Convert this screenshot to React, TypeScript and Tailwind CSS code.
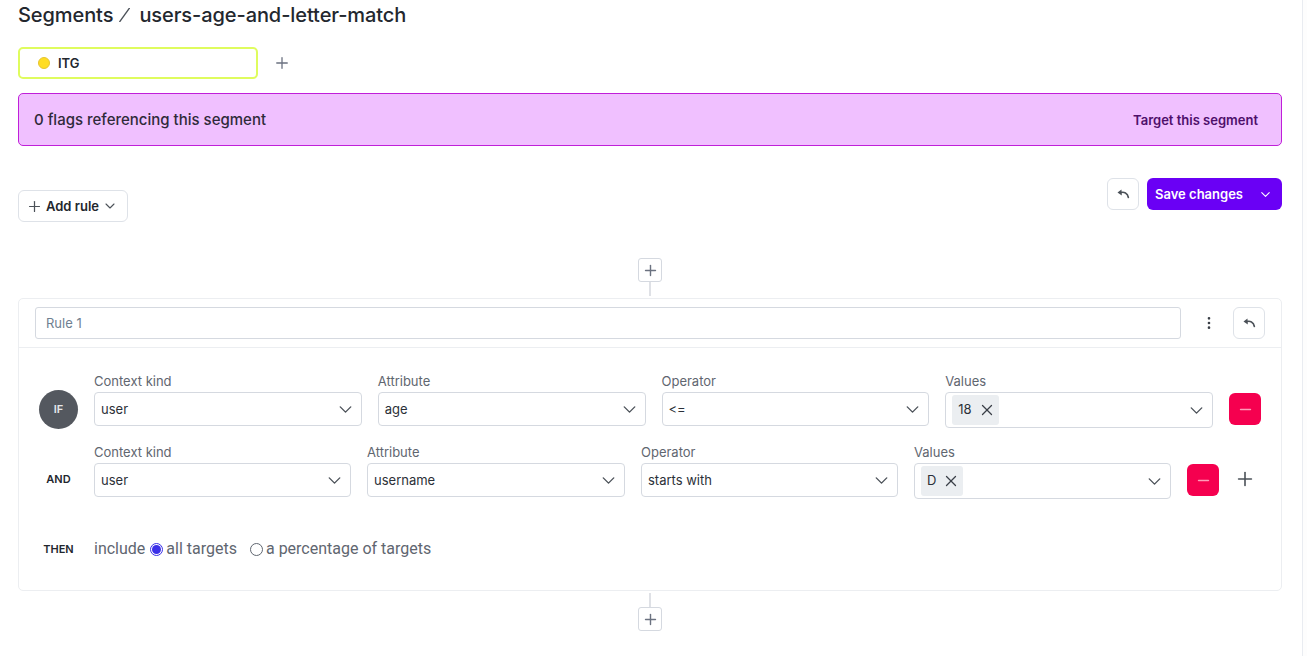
import { ChevronDown, EllipsisVertical, Minus, Plus, X } from 'lucide-react'

function UndoIcon() {
  return (
    <svg width="14" height="14" viewBox="0 0 14 14" fill="none">
      <path d="M1.5 5.5 L5.5 2.5 L5.8 8.5 Z" fill="#4b5158" />
      <path d="M4.5 5.6 C8 4.8 11.6 5.6 12.4 10.5" stroke="#4b5158" strokeWidth="1.6" strokeLinecap="round" />
    </svg>
  )
}

function UndoButton() {
  return (
    <button className="flex h-8 w-8 items-center justify-center rounded-md border border-[#dee2e8] bg-white">
      <UndoIcon />
    </button>
  )
}

function ConnectorPlus() {
  return (
    <button className="flex h-6 w-6 items-center justify-center rounded-[3px] border border-[#d5d9e0] bg-white text-[#6b7280]">
      <Plus className="h-[17px] w-[17px]" strokeWidth={2} />
    </button>
  )
}

function Field({ label, value, width }: { label: string; value: string; width: string }) {
  return (
    <div className={`flex flex-col ${width}`}>
      <span className="mb-[2px] h-[18px] text-[13px] leading-[18px] text-[#5f6670]">{label}</span>
      <div className="flex h-[34px] items-center justify-between rounded-[4px] border border-[#d5d9e0] bg-white pl-[6px] pr-[5px]">
        <span className="pt-[2px] text-[13px] text-[#2b3038]">{value}</span>
        <ChevronDown className="h-[21px] w-[21px] text-[#4b5158]" strokeWidth={1.6} />
      </div>
    </div>
  )
}

function ValuesField({ tag, width }: { tag: string; width: string }) {
  return (
    <div className={`flex flex-col ${width}`}>
      <span className="mb-[2px] h-[18px] text-[13px] leading-[18px] text-[#5f6670]">Values</span>
      <div className="flex h-[36px] items-center justify-between rounded-[4px] border border-[#d5d9e0] bg-white pl-[6px] pr-[5px]">
        <span className="flex h-[30px] items-center gap-[6px] rounded-[3px] bg-[#ebeef1] pl-[6px] pr-[3px] text-[13px] text-[#2b3038]">
          {tag}
          <X className="h-[18px] w-[18px] text-[#3a3f47]" strokeWidth={1.75} />
        </span>
        <ChevronDown className="h-[21px] w-[21px] text-[#4b5158]" strokeWidth={1.6} />
      </div>
    </div>
  )
}

function RemoveButton() {
  return (
    <button className="flex h-8 w-8 items-center justify-center rounded-md bg-[#f5004f] text-[#ff9cb8]">
      <Minus className="h-[17px] w-[17px]" strokeWidth={2} />
    </button>
  )
}

export default function App() {
  return (
    <div className="flex h-[656px] w-full overflow-hidden bg-white font-['Inter',sans-serif]">
      <div className="w-[1303px] shrink-0 border-r border-[#e9ecf1] pl-[18px] pr-[20px]">
        {/* Title */}
        <div className="flex h-[30px] items-center text-[20px] font-medium tracking-[-0.08px] text-[#23272e]">
          <span>Segments</span>
          <svg className="ml-[6px] mr-[9px]" width="11" height="14" viewBox="0 0 11 14" fill="none">
            <path d="M0.5 14 L10.5 0" stroke="#4b5158" strokeWidth="1.3" />
          </svg>
          <span>users-age-and-letter-match</span>
        </div>

        {/* Environment tab */}
        <div className="mt-[17px] flex items-center">
          <div className="flex h-8 w-[240px] items-center gap-[8px] rounded-[5px] border-2 border-[#dffc5e] pl-[18px]">
            <span className="h-3 w-3 rounded-full border border-[#e6c530] bg-[#ffdd22]" />
            <span className="pt-[2px] text-[13px] font-semibold text-[#23272e]">ITG</span>
          </div>
          <Plus className="ml-[15px] h-[18px] w-[18px] text-[#6b7280]" strokeWidth={1.75} />
        </div>

        {/* Reference banner */}
        <div className="mt-[14px] flex h-[53px] items-center justify-between rounded-[5px] border border-[#c01fd9] bg-[#f0c0ff] pl-[15px] pr-[23px]">
          <span className="pt-[2px] text-[15px] font-medium text-[#2f2a3a]">0 flags referencing this segment</span>
          <span className="pt-[2px] text-[13px] font-semibold text-[#4e0f6b]">Target this segment</span>
        </div>

        {/* Actions */}
        <div className="mt-[32px] flex h-[44px] items-start justify-between">
          <button className="mt-[12px] flex h-8 w-[110px] items-center gap-[3px] rounded-md border border-[#dee2e8] bg-white pl-[7px] text-[13px] font-semibold text-[#23272e]">
            <Plus className="h-[17px] w-[17px] text-[#4b5158]" strokeWidth={1.75} />
            <span className="pt-[2px]">Add rule</span>
            <ChevronDown className="h-4 w-4 text-[#4b5158]" strokeWidth={1.6} />
          </button>
          <div className="flex items-center gap-2">
            <UndoButton />
            <button className="flex h-8 w-[135px] items-center justify-between rounded-md bg-[#6a00f5] pl-2 pr-[9px] text-[13px] font-semibold text-white">
              <span className="pt-[2px]">Save changes</span>
              <ChevronDown className="h-[15px] w-[15px]" strokeWidth={1.75} />
            </button>
          </div>
        </div>

        {/* Connector above */}
        <div className="mt-[36px] flex flex-col items-center">
          <ConnectorPlus />
          <div className="h-[14px] w-[2px] bg-[#dfe1e6]" />
        </div>

        {/* Rule card */}
        <div className="mt-[2px] h-[293px] rounded-[5px] border border-[#eceef1]">
          <div className="flex h-[49px] items-center border-b border-[#eceef1] pl-4 pr-4">
            <div className="flex h-8 w-[1146px] items-center rounded-[3px] border border-[#d5d9e0] pl-[10px] pt-[1px] text-[13px] text-[#6f7f91]">
              Rule 1
            </div>
            <EllipsisVertical className="ml-[20px] h-[16px] w-[16px] text-[#3a3f47]" strokeWidth={2} />
            <div className="ml-[16px]">
              <UndoButton />
            </div>
          </div>

          <div className="mt-[24px] flex items-start pl-[20px]">
            <div className="mt-[18px] flex h-[39px] w-[39px] shrink-0 items-center justify-center rounded-full bg-[#54585f] text-[11px] font-semibold text-[#e6e7ea]">
              IF
            </div>
            <div className="ml-[16px] flex items-start gap-4">
              <Field label="Context kind" value="user" width="w-[267.75px]" />
              <Field label="Attribute" value="age" width="w-[267.75px]" />
              <Field label="Operator" value="<=" width="w-[267.75px]" />
              <ValuesField tag="18" width="w-[267.75px]" />
            </div>
            <div className="ml-4 mt-[21px]">
              <RemoveButton />
            </div>
          </div>

          <div className="mt-[14px] flex items-start pl-[20px]">
            <span className="mt-[28px] w-[39px] shrink-0 text-center text-[11px] leading-4 font-semibold text-[#23272e]">AND</span>
            <div className="ml-[16px] flex items-start gap-4">
              <Field label="Context kind" value="user" width="w-[257px]" />
              <Field label="Attribute" value="username" width="w-[258px]" />
              <Field label="Operator" value="starts with" width="w-[257px]" />
              <ValuesField tag="D" width="w-[257px]" />
            </div>
            <div className="ml-4 mt-[21px]">
              <RemoveButton />
            </div>
            <Plus className="ml-[15px] mt-[25px] h-[22px] w-[22px] text-[#4b5158]" strokeWidth={1.75} />
          </div>

          <div className="mt-[38px] flex items-center pl-[20px]">
            <span className="w-[39px] shrink-0 text-center text-[11px] font-semibold text-[#23272e]">THEN</span>
            <div className="ml-[16px] flex h-6 items-center font-['Roboto',sans-serif] text-[16px] text-[#5f6670]">
              <span>include</span>
              <span className="ml-[5px] flex h-[13px] w-[13px] items-center justify-center rounded-full border border-[#3b30e8]">
                <span className="h-[9px] w-[9px] rounded-full bg-[#3b30e8]" />
              </span>
              <span className="ml-[3px]">all targets</span>
              <span className="ml-[13px] h-[13px] w-[13px] rounded-full border border-[#5f6670]" />
              <span className="ml-[3px]">a percentage of targets</span>
            </div>
          </div>
        </div>

        {/* Connector below */}
        <div className="mt-[2px] flex flex-col items-center">
          <div className="h-[14px] w-[2px] bg-[#dfe1e6]" />
          <ConnectorPlus />
        </div>
      </div>
      <div className="flex-1 bg-[#fdfdfd]" />
    </div>
  )
}
